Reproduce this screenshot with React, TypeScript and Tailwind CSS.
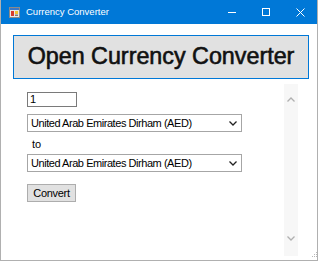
import React from "react";

function AppIcon() {
  return (
    <svg width="11" height="11" viewBox="0 0 11 11">
      <rect x="0.5" y="0.5" width="10" height="10" fill="#e8e8e8" stroke="#8a8a8a" />
      <rect x="1" y="1" width="9" height="2" fill="#3a78c8" />
      <rect x="2" y="4" width="3" height="5" fill="#d83b2b" />
      <rect x="6" y="4" width="3" height="3" fill="#f2c230" />
      <rect x="6" y="7.5" width="3" height="1.5" fill="#7a7a7a" />
    </svg>
  );
}

function Chevron({ up, color, w = 8 }: { up?: boolean; color: string; w?: number }) {
  return (
    <svg width={w} height="5" viewBox="0 0 8 5">
      <path
        d={up ? "M0.5 4.5 L4 1 L7.5 4.5" : "M0.5 0.5 L4 4 L7.5 0.5"}
        fill="none"
        stroke={color}
        strokeWidth="1.3"
      />
    </svg>
  );
}

function Select() {
  return (
    <div className="flex h-[18px] w-[215px] items-center justify-between border border-[#a6a6a6] bg-white pl-[3px] pr-[4px]">
      <span className="text-[11px] tracking-[-0.45px] text-black">United Arab Emirates Dirham (AED)</span>
      <Chevron color="#222" />
    </div>
  );
}

export default function App() {
  return (
    <div className="relative h-[262px] w-[320px] bg-white" style={{ fontFamily: '"Liberation Sans", Arial, sans-serif' }}>
      <div className="flex h-[261px] w-[318px] flex-col border-b border-l border-r border-[#b0b0b0]">
        <div className="flex h-[24px] items-center bg-[#0078d7]">
          <div className="ml-[8px] flex items-center">
            <AppIcon />
          </div>
          <span className="ml-[6px] text-[9.5px] text-white">Currency Converter</span>
          <div className="flex-1" />
          <div className="flex h-full w-[34px] items-center justify-center">
            <div className="h-px w-[8px] bg-white" />
          </div>
          <div className="flex h-full w-[34px] items-center justify-center">
            <div className="h-[8px] w-[8px] border border-white" />
          </div>
          <div className="flex h-full w-[34px] items-center justify-center">
            <svg width="9" height="9" viewBox="0 0 9 9">
              <path d="M0.5 0.5 L8.5 8.5 M8.5 0.5 L0.5 8.5" stroke="white" strokeWidth="1" />
            </svg>
          </div>
        </div>
        <div className="flex flex-1 flex-col px-[12px] pt-[11px]">
          <div className="flex h-[44px] w-[296px] items-center justify-center border border-[#0078d7] bg-[#e1e1e1]">
            <span className="text-[23.3px] leading-none text-[#111] [-webkit-text-stroke:0.6px_#111]">Open Currency Converter</span>
          </div>
          <div className="mt-[5px] flex h-[172px] w-[285px]">
            <div className="flex flex-1 flex-col items-start pl-[14px] pt-[8px]">
              <div className="flex h-[15px] w-[50px] items-center border border-[#7a7a7a] bg-white pl-[2px]">
                <span className="text-[11px] text-black">1</span>
              </div>
              <div className="mt-[7px]">
                <Select />
              </div>
              <span className="mt-[4px] pl-[5px] text-[11px] leading-[16px] text-black">to</span>
              <div className="mt-[2px]">
                <Select />
              </div>
              <div className="mt-[12px] flex h-[18px] w-[49px] items-center justify-center border border-[#adadad] bg-[#e1e1e1]">
                <span className="text-[11px] tracking-[-0.3px] text-black">Convert</span>
              </div>
            </div>
            <div className="flex w-[14px] flex-col items-center justify-between bg-[#f7f7f7] pb-[15px] pt-[13px]">
              <Chevron up color="#b0b0b0" />
              <Chevron color="#b0b0b0" />
            </div>
          </div>
        </div>
      </div>
      <svg className="absolute left-[312px] top-[252px]" width="5" height="5" viewBox="0 0 5 5">
        <rect x="4" y="0" width="1" height="1" fill="#b8b8b8" />
        <rect x="2" y="2" width="1" height="1" fill="#b8b8b8" />
        <rect x="4" y="2" width="1" height="1" fill="#b8b8b8" />
        <rect x="0" y="4" width="1" height="1" fill="#b8b8b8" />
        <rect x="2" y="4" width="1" height="1" fill="#b8b8b8" />
        <rect x="4" y="4" width="1" height="1" fill="#b8b8b8" />
      </svg>
    </div>
  );
}
